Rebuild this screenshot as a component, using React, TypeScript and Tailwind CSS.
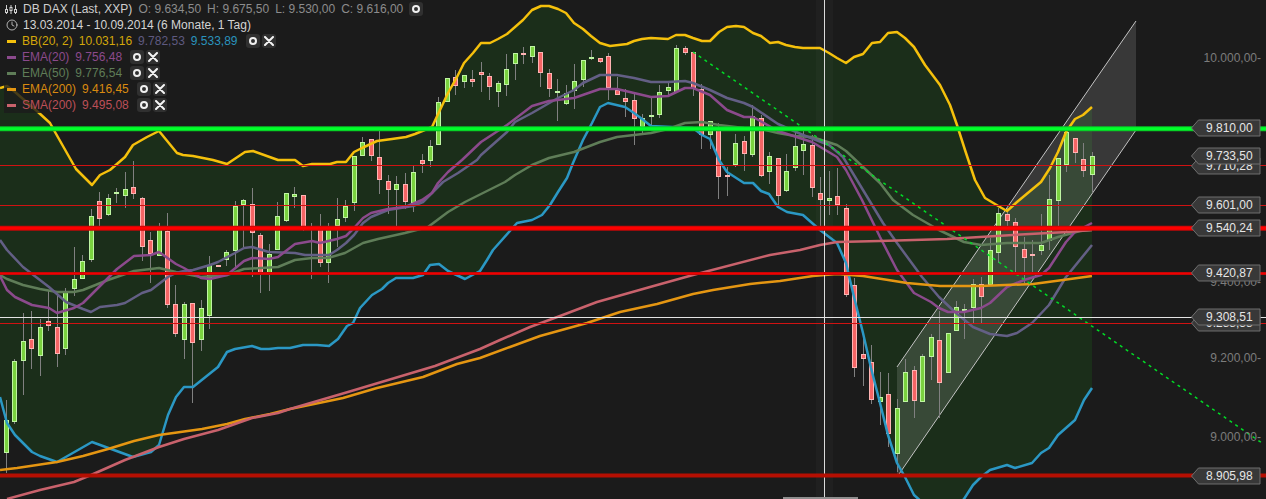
import { Clock } from "lucide-react";
import type { ReactNode } from "react";

type Candle = [number, number, number, number, number];

// [wick high, body top, body bottom, wick low, 1 = up]; first entry sits just off the left edge
const CANDLES: Candle[] = [
  [340, 344, 457, 470, 0], [400, 420, 453, 473, 1], [359, 361, 422, 424, 1], [313, 341, 361, 395, 1], [311, 339, 349, 369, 0],
  [319, 327, 356, 376, 1], [291, 321, 326, 331, 0], [294, 327, 354, 367, 0], [288, 291, 349, 355, 1], [247, 279, 289, 296, 1],
  [255, 261, 279, 279, 1], [209, 216, 260, 262, 1], [192, 201, 219, 226, 0], [194, 198, 215, 216, 1], [188, 192, 194, 203, 1],
  [172, 189, 196, 208, 1], [161, 187, 194, 199, 0], [197, 198, 247, 261, 0], [232, 240, 254, 283, 0], [223, 226, 256, 256, 1],
  [213, 231, 305, 308, 0], [285, 304, 334, 337, 0], [302, 304, 340, 359, 1], [303, 303, 343, 403, 0], [300, 308, 340, 351, 1],
  [256, 265, 316, 329, 1], [265, 265, 266, 266, 0], [250, 252, 260, 266, 1], [201, 206, 251, 267, 1], [199, 200, 205, 247, 1],
  [188, 204, 233, 277, 0], [233, 235, 275, 293, 0], [244, 254, 275, 291, 1], [202, 216, 250, 250, 1], [193, 193, 221, 222, 1],
  [187, 194, 197, 208, 1], [195, 195, 229, 231, 0], [223, 227, 229, 279, 0], [214, 229, 263, 267, 0], [223, 227, 263, 283, 1],
  [198, 219, 226, 247, 1], [200, 206, 218, 222, 1], [156, 156, 203, 211, 1], [137, 142, 156, 156, 1], [139, 139, 156, 161, 0],
  [130, 157, 180, 194, 0], [175, 181, 190, 214, 0], [176, 184, 190, 227, 1], [173, 184, 202, 209, 0], [166, 172, 203, 212, 1],
  [154, 160, 164, 173, 0], [140, 146, 161, 167, 1], [97, 102, 145, 145, 1], [78, 78, 102, 102, 1], [70, 77, 86, 95, 0],
  [75, 75, 82, 88, 1], [70, 79, 82, 87, 0], [62, 72, 75, 92, 0], [73, 76, 87, 100, 0], [81, 83, 92, 107, 1],
  [54, 69, 85, 96, 1], [53, 53, 64, 80, 1], [47, 53, 55, 64, 0], [46, 46, 57, 63, 1], [52, 52, 73, 87, 0],
  [69, 73, 89, 97, 0], [79, 91, 92, 121, 1], [85, 93, 104, 105, 1], [64, 81, 91, 109, 1], [60, 60, 80, 87, 1],
  [50, 57, 59, 60, 1], [58, 58, 62, 63, 0], [53, 56, 88, 100, 0], [77, 90, 95, 95, 0], [89, 98, 102, 117, 0],
  [94, 100, 119, 145, 0], [114, 118, 127, 134, 1], [98, 115, 117, 131, 1], [85, 92, 115, 118, 1], [83, 87, 91, 97, 1],
  [45, 48, 92, 93, 1], [46, 48, 53, 55, 0], [52, 52, 88, 96, 0], [84, 89, 135, 149, 0], [121, 121, 135, 149, 1],
  [123, 128, 177, 199, 0], [167, 175, 177, 196, 0], [134, 143, 165, 167, 1], [136, 141, 154, 171, 0], [105, 116, 155, 157, 1],
  [115, 118, 176, 177, 0], [152, 156, 172, 184, 1], [158, 158, 196, 205, 0], [154, 171, 191, 192, 1], [130, 146, 168, 171, 1],
  [131, 144, 151, 175, 1], [135, 145, 188, 197, 0], [177, 193, 200, 227, 0], [171, 198, 201, 215, 1], [168, 196, 205, 215, 0],
  [204, 208, 295, 297, 0], [278, 285, 368, 377, 0], [333, 354, 359, 386, 0], [345, 362, 400, 404, 0], [372, 397, 402, 425, 1],
  [373, 394, 434, 447, 0], [399, 408, 454, 472, 1], [359, 372, 402, 402, 1], [366, 370, 401, 418, 0], [354, 356, 402, 402, 1],
  [334, 337, 357, 380, 1], [311, 340, 383, 418, 0], [333, 333, 373, 373, 1], [301, 307, 331, 331, 1], [304, 309, 310, 339, 1],
  [279, 284, 308, 323, 1], [277, 284, 297, 323, 0], [238, 250, 285, 285, 1], [208, 213, 253, 263, 1], [208, 214, 221, 226, 0],
  [218, 222, 247, 273, 0], [237, 249, 258, 283, 0], [240, 254, 255, 273, 0], [214, 245, 251, 255, 1], [175, 199, 241, 250, 1],
  [158, 158, 201, 228, 1], [132, 132, 165, 172, 1], [138, 138, 153, 163, 0], [143, 159, 171, 177, 0], [152, 156, 175, 192, 1],
];

const UPPER = "0,88 7,86 15,92 38,112 50,123 55,132 76,169 92,185 100,175 110,170 125,157 133,145 147,137 159,131 177,153 183,155 193,156 213,160 227,164 245,152 253,151 278,160 295,160 303,166 312,164 330,164 337,162 346,162 354,152 362,148 377,141 392,139 406,137 415,134 432,127 440,110 448,93 457,77 464,63 473,53 481,43 490,43 498,39 507,34 523,20 532,10 541,6 549,6 558,9 566,13 574,23 583,29 591,36 600,43 610,46 627,44 634,41 642,39 651,38 668,39 676,35 685,35 693,38 702,41 710,41 719,32 727,27 736,26 744,27 753,33 761,36 770,43 778,42 786,45 795,47 803,48 820,48 829,53 837,58 846,63 854,57 863,54 872,43 880,42 888,33 897,32 905,38 914,47 925,65 940,85 950,105 957,125 965,150 975,180 985,198 1000,207 1007,211 1017,202 1041,182 1050,168 1058,152 1066,132 1075,119 1083,115 1092,107";
const LOWER = "0,397 7,423 15,435 32,452 40,456 57,462 92,442 133,457 151,452 159,445 168,415 176,397 184,387 193,387 218,367 227,352 235,349 252,346 261,349 269,349 278,348 290,348 303,345 317,345 329,346 338,339 347,326 353,323 360,308 372,295 382,289 388,283 396,278 413,278 423,275 430,265 439,264 448,271 465,279 480,271 487,260 493,250 517,223 532,220 542,215 550,205 558,192 567,178 573,163 583,140 592,123 600,107 608,103 625,107 634,113 642,119 651,126 693,128 702,135 710,139 719,160 727,172 744,183 753,183 761,191 769,194 778,207 787,212 803,215 820,230 837,243 846,263 854,297 863,333 871,368 880,403 888,435 897,463 905,477 914,495 923,503 960,503 964,499 973,485 981,477 990,470 1007,465 1015,468 1032,463 1041,453 1049,448 1058,435 1075,420 1084,400 1092,388";
const MID = "0,240 7,250 23,267 49,287 66,302 83,309 91,312 100,307 117,305 125,303 142,293 151,290 168,277 176,273 184,271 193,270 210,265 218,262 235,253 244,248 252,247 269,252 295,253 305,255 329,255 337,250 346,243 354,235 363,223 371,217 388,210 413,206 423,202 432,193 443,182 458,173 477,160 481,155 507,132 515,122 532,113 558,98 574,90 583,83 600,75 617,75 634,78 651,82 668,82 685,81 693,83 710,90 727,98 744,103 753,107 778,124 803,135 829,145 843,157 863,190 883,223 897,243 922,277 939,297 956,313 973,327 990,334 1007,336 1017,333 1032,323 1049,305 1066,277 1092,245";
const EMA20 = "0,276 7,290 15,297 32,305 49,308 57,313 74,308 83,303 100,286 117,269 134,256 151,255 159,252 176,264 184,268 201,278 210,279 227,275 244,261 252,258 269,259 278,257 295,244 312,241 320,243 337,239 346,236 354,228 363,218 371,213 388,209 405,207 422,200 432,193 438,183 448,172 462,160 481,142 507,125 532,106 549,101 574,98 600,89 617,89 634,93 651,97 668,96 685,88 693,88 710,95 727,110 744,117 753,117 778,131 812,142 837,157 846,170 862,200 880,237 897,270 914,293 931,302 939,308 948,312 964,312 981,308 990,303 1007,287 1024,280 1041,275 1049,268 1066,242 1075,232 1092,223";
const EMA50 = "0,275 7,279 23,285 40,289 57,292 74,292 83,290 108,280 134,271 159,268 176,272 201,277 227,275 244,269 261,268 278,267 295,260 312,258 328,258 345,253 363,243 378,239 405,233 428,227 448,212 465,202 485,192 505,182 515,175 532,165 549,158 574,152 600,142 617,137 634,135 651,133 668,129 685,123 702,122 719,125 744,128 761,129 778,133 795,136 812,137 837,145 846,151 863,167 880,183 893,200 913,215 939,230 964,242 981,245 1007,243 1041,243 1058,237 1080,231 1092,230";
const EMA200 = "0,470 17,468 57,462 83,456 108,449 134,441 159,435 202,429 227,424 245,419 270,414 290,409 343,398 377,388 423,377 457,364 480,358 510,347 540,336 587,323 620,312 657,304 693,294 713,290 750,284 780,281 813,276 837,274 863,276 907,283 940,286 980,286 1033,284 1063,280 1092,276";
const SMA200 = "7,499 40,490 74,482 91,475 125,460 159,447 184,439 218,430 252,418 278,413 290,409 348,392 435,366 480,349 500,340 530,327 560,316 597,302 650,287 693,275 770,255 800,250 820,245 837,242 880,241 947,239 1013,235 1067,232 1092,230";

const BAND = `${UPPER} ${LOWER.split(" ").reverse().join(" ")}`;

const INDICATORS = [
  { points: UPPER, className: "stroke-[#f5c00c]" },
  { points: LOWER, className: "stroke-[#2b98c4]" },
  { points: EMA50, className: "stroke-[#5f7d58]" },
  { points: MID, className: "stroke-[#635f85]" },
  { points: EMA20, className: "stroke-[#8b4a8c]" },
  { points: EMA200, className: "stroke-[#e59612]" },
  { points: SMA200, className: "stroke-[#c9626c]" },
];

const AXIS = [
  { y: 58, text: "10.000,00-" },
  { y: 282, text: "9.400,00-" },
  { y: 358, text: "9.200,00-" },
  { y: 437, text: "9.000,00-" },
];

// order matters: later tags cover the earlier ones
const PRICE_TAGS = [
  { y: 128, text: "9.810,00" },
  { y: 166, text: "9.710,28" },
  { y: 156, text: "9.733,50" },
  { y: 205, text: "9.601,00" },
  { y: 228, text: "9.540,24" },
  { y: 273, text: "9.420,87" },
  { y: 323, text: "9.288,38" },
  { y: 317, text: "9.308,51" },
  { y: 476, text: "8.905,98" },
];

function CircleButton() {
  return (
    <span className="flex h-[14px] w-[14px] items-center justify-center rounded-[3px] bg-[#303030]">
      <svg width="10" height="10" viewBox="0 0 10 10">
        <circle cx="5" cy="5" r="3" fill="none" stroke="#f0f0f0" strokeWidth="2" />
      </svg>
    </span>
  );
}

function CloseButton() {
  return (
    <span className="flex h-[14px] w-[14px] items-center justify-center rounded-[3px] bg-[#303030]">
      <svg width="10" height="10" viewBox="0 0 10 10">
        <path d="M1 1L9 9M9 1L1 9" stroke="#f4f4f4" strokeWidth="2" strokeLinecap="round" />
      </svg>
    </span>
  );
}

function IndicatorRow({ swatch, children }: { swatch: string; children: ReactNode }) {
  return (
    <div className="flex h-4 w-fit items-center gap-[6px] bg-[#1b1b1b]/80 pl-[3px] pr-[3px]">
      <span className={`h-[3px] w-[9px] ${swatch}`} />
      {children}
      <span className="ml-[2px] flex gap-[2px]">
        <CircleButton />
        <CloseButton />
      </span>
    </div>
  );
}

function Legend() {
  return (
    <div className="absolute left-[4px] top-[1px] flex flex-col text-[12px] leading-4">
      <div className="flex h-4 w-fit items-center gap-[6px] bg-[#1b1b1b]/80 pl-[1px] pr-[4px] text-[#8c8c8c]">
        <svg width="12" height="9" viewBox="0 0 12 9" className="shrink-0">
          <path d="M1.5 0V9M6 0V9M10.5 0V9" stroke="#d0d0d0" strokeWidth="1" />
          <rect x="0.5" y="4.5" width="2" height="3" fill="#1b1b1b" stroke="#d0d0d0" strokeWidth="1" />
          <rect x="5" y="2.5" width="2" height="3" fill="#1b1b1b" stroke="#d0d0d0" strokeWidth="1" />
          <rect x="9.5" y="4.5" width="2" height="3" fill="#1b1b1b" stroke="#d0d0d0" strokeWidth="1" />
        </svg>
        <span className="text-[#cfcfcf]">DB DAX (Last, XXP)</span>
        <span>O: 9.634,50</span>
        <span>H: 9.675,50</span>
        <span>L: 9.530,00</span>
        <span>C: 9.616,00</span>
        <CircleButton />
      </div>
      <div className="flex h-4 w-fit items-center gap-[5px] bg-[#1b1b1b]/80 pl-[2px] pr-[4px] text-[#d4d4d4]">
        <Clock size={12} strokeWidth={1.6} />
        <span>13.03.2014 - 10.09.2014 (6 Monate, 1 Tag)</span>
      </div>
      <IndicatorRow swatch="bg-[#f5c00c]">
        <span className="text-[#d3a70a]">BB(20, 2)</span>
        <span className="text-[#d3a70a]">10.031,16</span>
        <span className="text-[#5f5a80]">9.782,53</span>
        <span className="text-[#2a93bd]">9.533,89</span>
      </IndicatorRow>
      <IndicatorRow swatch="bg-[#8b4a8c]">
        <span className="text-[#8b4a8c]">EMA(20)</span>
        <span className="text-[#8b4a8c]">9.756,48</span>
      </IndicatorRow>
      <IndicatorRow swatch="bg-[#5f7d58]">
        <span className="text-[#5f7d58]">EMA(50)</span>
        <span className="text-[#5f7d58]">9.776,54</span>
      </IndicatorRow>
      <IndicatorRow swatch="bg-[#e59612]">
        <span className="text-[#d98a10]">EMA(200)</span>
        <span className="text-[#d98a10]">9.416,45</span>
      </IndicatorRow>
      <IndicatorRow swatch="bg-[#c9626c]">
        <span className="text-[#bd4f58]">SMA(200)</span>
        <span className="text-[#bd4f58]">9.495,08</span>
      </IndicatorRow>
    </div>
  );
}

function Chart() {
  return (
    <svg width="1266" height="499" viewBox="0 0 1266 499" className="block">
      <polygon points={BAND} className="fill-[#1b2e1a]" />

      {/* channel drawn on the chart */}
      <polygon points="897,367 1136,21 1136,130 897,477" fill="#ffffff" fillOpacity="0.13" />
      <path d="M897 367L1136 21M897 477L1136 130" stroke="#c4c4c4" strokeWidth="1" fill="none" />

      {CANDLES.map(([high, top, bottom, low, up], i) => {
        const x = Math.floor(6.3 + 8.484 * (i - 1)) + 0.5;
        return (
          <g key={i}>
            <path d={`M${x} ${high}V${low}`} stroke="#808080" strokeWidth="1" />
            <rect
              x={x - 2}
              y={top + 0.5}
              width="4"
              height={Math.max(bottom - top - 1, 1)}
              className={up ? "fill-[#7ad23f] stroke-[#bff5a3]" : "fill-[#f56565] stroke-[#ffb3b3]"}
              strokeWidth="1"
            />
          </g>
        );
      })}

      {INDICATORS.map((line) => (
        <polyline key={line.points} points={line.points} fill="none" strokeWidth="2.5" strokeLinejoin="round" className={line.className} />
      ))}

      <line x1="693" y1="52" x2="1262" y2="443" stroke="#00dc26" strokeWidth="1.5" strokeDasharray="3 4" />

      <rect x="816" y="0" width="17" height="499" fill="#ffffff" fillOpacity="0.025" />
      <line x1="824.5" y1="0" x2="824.5" y2="499" stroke="#dcdcdc" strokeWidth="1" />
      <rect x="783" y="497" width="75" height="2" fill="#8e8e8e" />

      {/* thin levels */}
      <line x1="0" y1="165.5" x2="1266" y2="165.5" stroke="#d01212" strokeWidth="1" />
      <line x1="0" y1="205.5" x2="1266" y2="205.5" stroke="#d01212" strokeWidth="1" />
      <line x1="0" y1="323.5" x2="1266" y2="323.5" stroke="#d01212" strokeWidth="1" />
      <line x1="0" y1="317.5" x2="1266" y2="317.5" stroke="#e4e4e4" strokeWidth="1" />

      {/* heavy levels */}
      <line x1="0" y1="128.7" x2="1266" y2="128.7" stroke="#08c426" strokeWidth="5" />
      <line x1="0" y1="128.7" x2="1266" y2="128.7" stroke="#00ff2a" strokeWidth="3" />
      <line x1="0" y1="228.3" x2="1266" y2="228.3" stroke="#c40808" strokeWidth="5" />
      <line x1="0" y1="228.3" x2="1266" y2="228.3" stroke="#ff0000" strokeWidth="3" />
      <line x1="0" y1="273.4" x2="1266" y2="273.4" stroke="#b80a0a" strokeWidth="3" />
      <line x1="0" y1="273.4" x2="1266" y2="273.4" stroke="#f00000" strokeWidth="1.5" />
      <line x1="0" y1="475.5" x2="1266" y2="475.5" stroke="#b50f02" strokeWidth="4" />

      {AXIS.map((tick) => (
        <text key={tick.text} x="1261" y={tick.y + 4} textAnchor="end" className="fill-[#7c7c7c] text-[12px]">
          {tick.text}
        </text>
      ))}

      {PRICE_TAGS.map((tag) => (
        <g key={tag.text}>
          <polygon
            points={`1191.5,${tag.y} 1198.5,${tag.y - 8} 1260,${tag.y - 8} 1260,${tag.y + 8} 1198.5,${tag.y + 8}`}
            className="fill-[#383838] stroke-[#6f6f6f]"
            strokeWidth="1"
          />
          <text x="1206" y={tag.y + 4} className="fill-[#e6e6e6] text-[12px]">
            {tag.text}
          </text>
        </g>
      ))}
    </svg>
  );
}

export default function App() {
  return (
    <div className="relative h-[499px] w-full overflow-hidden bg-[#1b1b1b] font-['Liberation_Sans',Arial,sans-serif]">
      <Chart />
      <Legend />
    </div>
  );
}
